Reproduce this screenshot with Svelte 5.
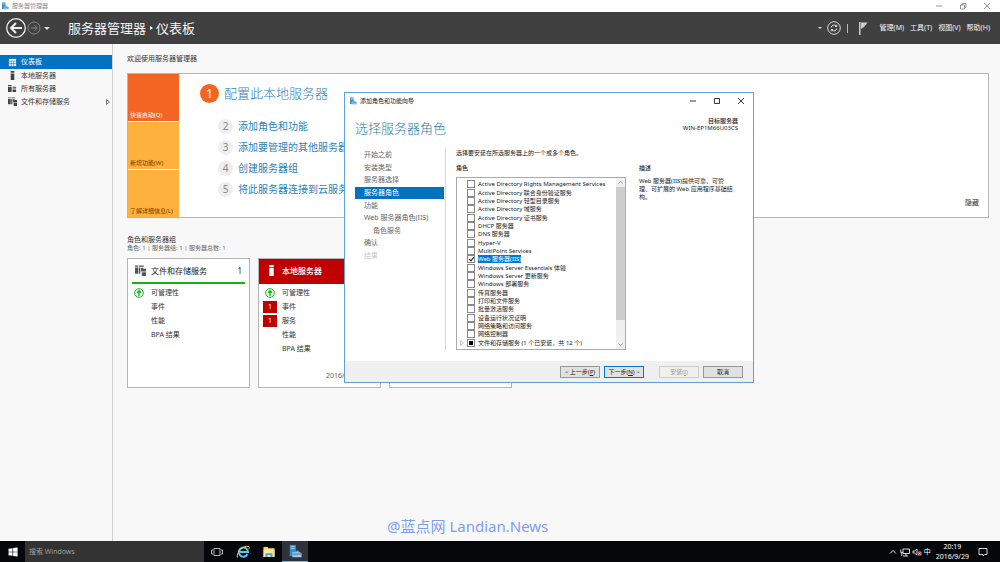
<script lang="ts">
	const navItems = [
		{ label: '仪表板', icon: 'grid', active: true },
		{ label: '本地服务器', icon: 'server' },
		{ label: '所有服务器', icon: 'servers' },
		{ label: '文件和存储服务', icon: 'storage', more: true }
	];

	const menus = ['管理(M)', '工具(T)', '视图(V)', '帮助(H)'];

	const steps = ['添加角色和功能', '添加要管理的其他服务器', '创建服务器组', '将此服务器连接到云服务'];

	const localRows = [
		{ label: '可管理性', ok: true },
		{ label: '事件', alerts: 1 },
		{ label: '服务', alerts: 1 },
		{ label: '性能' },
		{ label: 'BPA 结果' }
	];

	const storageRows = [
		{ label: '可管理性', ok: true },
		{ label: '事件' },
		{ label: '性能' },
		{ label: 'BPA 结果' }
	];

	const groups = [
		{ title: '文件和存储服务', icon: 'storage', count: 1, rows: storageRows },
		{ title: '本地服务器', icon: 'server', count: 1, critical: true, rows: localRows, updated: '2016/9/29 20:18' },
		{ title: '所有服务器', icon: 'servers', count: 1, critical: true, rows: localRows, updated: '2016/9/29 20:18' }
	];

	const wizardSteps = [
		{ label: '开始之前' },
		{ label: '安装类型' },
		{ label: '服务器选择' },
		{ label: '服务器角色', active: true },
		{ label: '功能' },
		{ label: 'Web 服务器角色(IIS)' },
		{ label: '角色服务', child: true },
		{ label: '确认' },
		{ label: '结果', disabled: true }
	];

	const roles = [
		'Active Directory Rights Management Services',
		'Active Directory 联合身份验证服务',
		'Active Directory 轻型目录服务',
		'Active Directory 域服务',
		'Active Directory 证书服务',
		'DHCP 服务器',
		'DNS 服务器',
		'Hyper-V',
		'MultiPoint Services',
		'Web 服务器(IIS)',
		'Windows Server Essentials 体验',
		'Windows Server 更新服务',
		'Windows 部署服务',
		'传真服务器',
		'打印和文件服务',
		'批量激活服务',
		'设备运行状况证明',
		'网络策略和访问服务',
		'网络控制器',
		'文件和存储服务 (1 个已安装，共 12 个)'
	];

	const selectedRole = 9;
	const partialRole = roles.length - 1;
</script>

{#snippet glyph(name)}
	<svg class="glyph" viewBox="0 0 10 10" aria-hidden="true">
		{#if name === 'grid'}
			<path d="M1 1h8v8H1z" fill="currentColor" />
			<path d="M1 3.5h8M1 6.3h8M3.6 3.5V9M6.4 3.5V9" stroke="#0072c0" stroke-width=".7" />
		{:else if name === 'server'}
			<path d="M3 0h4v2H3zM3 2.8h4V10H3z" fill="currentColor" />
		{:else if name === 'servers'}
			<path d="M0 1h4v1.5H0zM0 3.2h4V9H0zM5 3h4v1.2H5zM5 5h4v1H5zM5 6.7h4V9H5z" fill="currentColor" />
		{:else}
			<path d="M0 .5h3v1H0zM0 2.2h3V8H0zM3.6.5H8v1H3.6zM3.6 2.2h1.2V8H3.6z" fill="currentColor" />
			<path d="M5.4 2.6h1.8l.6.8H10v2.4H5.4zM6.2 6.5H10V10H6.2z" fill="currentColor" />
		{/if}
	</svg>
{/snippet}

{#snippet serverLogo()}
	<svg class="logo" viewBox="0 0 16 16" aria-hidden="true">
		<path d="M2 1h7v13H2z" fill="#2f91cf" />
		<path d="M3.2 3h4.6M3.2 5h4.6" stroke="#a8dcf8" />
		<path d="M5 9.5 11 8l4.5 2.5V15H5z" fill="#9cc6df" />
		<path d="M5 11.5h10.5" stroke="#3d7599" />
		<path d="M8 9.5V8h4v1.8" fill="none" stroke="#4e91b7" />
	</svg>
{/snippet}

{#snippet windowButtons(restore)}
	<div class="window-buttons">
		<button aria-label="最小化"><svg viewBox="0 0 8 8"><path d="M1 4h6" /></svg></button>
		<button aria-label={restore ? '还原' : '最大化'}>
			<svg viewBox="0 0 8 8">
				<path d={restore ? 'M1.5 3h4v4h-4zM3 3V1.5h4v4H5.5' : 'M1.5 1.5h5v5h-5z'} />
			</svg>
		</button>
		<button aria-label="关闭"><svg viewBox="0 0 8 8"><path d="m1 1 6 6M7 1 1 7" /></svg></button>
	</div>
{/snippet}

<div class="desktop">
	<div class="titlebar">
		{@render serverLogo()}
		<span>服务器管理器</span>
		{@render windowButtons(true)}
	</div>

	<header>
		<button class="back" aria-label="后退">
			<svg viewBox="0 0 22 22">
				<circle cx="11" cy="11" r="9.3" />
				<path d="M17 11H6M11 6l-5 5 5 5" stroke-width="2" />
			</svg>
		</button>
		<button class="forward" aria-label="前进">
			<svg viewBox="0 0 14 14">
				<circle cx="7" cy="7" r="6" />
				<path d="M3.5 7H10M7.5 4.2 10.2 7 7.5 9.8" />
			</svg>
		</button>
		<button class="caret" aria-label="历史记录"></button>
		<h1>服务器管理器<i></i>仪表板</h1>
		<div class="commands">
			<button class="caret small" aria-label="通知列表"></button>
			<button class="refresh" aria-label="刷新">
				<svg viewBox="0 0 14 14">
					<circle cx="7" cy="7" r="6.3" />
					<path d="M4.2 6.5a2.9 2.9 0 0 1 5-1.5M9.8 3.7v1.8H8M9.8 7.5a2.9 2.9 0 0 1-5 1.5M4.2 10.3V8.5H6" />
				</svg>
			</button>
			<span class="divider"></span>
			<button class="flag" aria-label="通知">
				<svg viewBox="0 0 10 13"><path d="M1 0h1.5v13H1z" /><path d="M3 .5h6.5L6 5 3 7z" /></svg>
			</button>
			<nav>
				{#each menus as menu}
					<button>{menu}</button>
				{/each}
			</nav>
		</div>
	</header>

	<div class="body">
		<aside>
			{#each navItems as item}
				<button class:active={item.active}>
					{@render glyph(item.icon)}
					<span>{item.label}</span>
					{#if item.more}
						<svg class="more" viewBox="0 0 4 6"><path d="M.5.7 3.4 3 .5 5.3z" /></svg>
					{/if}
				</button>
			{/each}
		</aside>

		<main>
			<h2>欢迎使用服务器管理器</h2>

			<section class="welcome">
				<div class="tabs">
					<button class="current">快速启动(Q)</button>
					<button>新增功能(W)</button>
					<button>了解详细信息(L)</button>
				</div>
				<div class="start">
					<a class="primary" href="#local"><b>1</b>配置此本地服务器</a>
					<ol>
						{#each steps as step, i}
							<li><a href="#step-{i + 2}"><b>{i + 2}</b>{step}</a></li>
						{/each}
					</ol>
				</div>
				<button class="hide">隐藏</button>
			</section>

			<h3>角色和服务器组</h3>
			<p class="summary">角色: 1 | 服务器组: 1 | 服务器总数: 1</p>

			<div class="groups">
				{#each groups as group}
					<article class:critical={group.critical}>
						<div class="group-head">
							{@render glyph(group.icon)}
							<span>{group.title}</span>
							<em>{group.count}</em>
						</div>
						<ul>
							{#each group.rows as row}
								<li>
									<span class="status">
										{#if row.ok}
											<svg viewBox="0 0 10 10">
												<circle cx="5" cy="5" r="4.3" />
												<path d="M5 8V3M3 4.8l2-2 2 2" stroke-width="1.4" />
											</svg>
										{:else if row.alerts}
											<b>{row.alerts}</b>
										{/if}
									</span>
									{row.label}
								</li>
							{/each}
						</ul>
						{#if group.updated}
							<time>{group.updated}</time>
						{/if}
					</article>
				{/each}
			</div>
		</main>

		<div class="watermark">@蓝点网 Landian.News</div>
	</div>

	<div class="dialog" role="dialog" aria-labelledby="wizard-title">
		<div class="dialog-title">
			{@render serverLogo()}
			<span id="wizard-title">添加角色和功能向导</span>
			{@render windowButtons(false)}
		</div>
		<div class="dialog-head">
			<h2>选择服务器角色</h2>
			<p><strong>目标服务器</strong><br />WIN-EP1M66U03CS</p>
		</div>
		<div class="dialog-body">
			<div class="wizard-nav">
				<div class="wizard-steps">
					{#each wizardSteps as step}
						<button class:active={step.active} class:child={step.child} disabled={step.disabled}>
							{step.label}
						</button>
					{/each}
				</div>
			</div>
			<div class="wizard-page">
				<p>选择要安装在所选服务器上的一个或多个角色。</p>
				<div class="columns">
					<div class="roles">
						<h4>角色</h4>
						<div class="listbox">
							<div class="role-list">
								{#each roles as role, i}
									<label class:selected={i === selectedRole}>
										<i class="expander">
											{#if i === partialRole}
												<svg viewBox="0 0 4 6"><path d="M.5.7 3.4 3 .5 5.3z" /></svg>
											{/if}
										</i>
										<input type="checkbox" checked={i === selectedRole} class:partial={i === partialRole} />
										<span>{role}</span>
									</label>
								{/each}
							</div>
							<div class="scrollbar">
								<svg viewBox="0 0 8 8"><path d="M2 5l2-2 2 2" /></svg>
								<div class="thumb"></div>
								<svg viewBox="0 0 8 8"><path d="M2 3l2 2 2-2" /></svg>
							</div>
						</div>
					</div>
					<div class="description">
						<h4>描述</h4>
						<p>Web 服务器(IIS)提供可靠、可管理、可扩展的 Web 应用程序基础结构。</p>
					</div>
				</div>
			</div>
		</div>
		<div class="dialog-actions">
			<button>&lt; 上一步(<u>P</u>)</button>
			<button class="default">下一步(<u>N</u>) &gt;</button>
			<button class="install" disabled>安装(<u>I</u>)</button>
			<button>取消</button>
		</div>
	</div>

	<footer>
		<button class="start-button" aria-label="开始">
			<svg viewBox="0 0 10 10">
				<path d="M.5 1.8 4.5 1.2v3.5h-4zM5.1 1.1 9.6.5v4.2H5.1zM.5 5.3h4v3.5l-4-.6zM5.1 5.3h4.5v4.2l-4.5-.6z" />
			</svg>
		</button>
		<input class="search" type="text" placeholder="搜索 Windows" aria-label="搜索" />
		<button class="app" aria-label="任务视图">
			<svg class="line" viewBox="0 0 12 12"><path d="M3 2.5h6v7H3zM2 4H.5v4H2M10 4h1.5v4H10" /></svg>
		</button>
		<button class="app" aria-label="Internet Explorer">
			<svg viewBox="0 0 14 14">
				<path d="M11.5 9.2A4.6 4.6 0 1 1 12 7H4" fill="none" stroke="#55c8f5" stroke-width="2" />
				<path d="M1.5 12.5C-.5 9 7-.5 12.8 1.6c.8.5.5 1.6 0 2.5" fill="none" stroke="#f5cf3c" />
			</svg>
		</button>
		<button class="app" aria-label="文件资源管理器">
			<svg viewBox="0 0 14 14">
				<path d="M1.5 2h4l1 1.2h6V12h-11z" fill="#f6d873" />
				<path d="M1.5 4.5h11V12h-11z" fill="#fce99a" />
				<path d="M3.5 12V8.2h7V12h-2v-2h-3v2z" fill="#42a7de" />
			</svg>
		</button>
		<button class="app running" aria-label="服务器管理器">{@render serverLogo()}</button>

		<div class="tray">
			<svg viewBox="0 0 10 10"><path d="m2 6.5 3-3 3 3" /></svg>
			<svg viewBox="0 0 10 10"><path d="M3 2h6.5v4.5H3zM6 6.5V9M3 9h5M.8 2.5v3h2M1.8 5.5V9" /></svg>
			<svg viewBox="0 0 10 10">
				<path d="M1 4h1.5L5 2v6L2.5 6H1z" />
				<circle cx="7.5" cy="6.5" r="2.5" class="mute" />
				<path d="m6.5 5.5 2 2m0-2-2 2" />
			</svg>
			<span>中</span>
			<time>20:19<br />2016/9/29</time>
			<svg class="notice" viewBox="0 0 10 10"><path d="M1 1.5h8v6H6.5L5 9V7.5H1z" /></svg>
		</div>
	</footer>
</div>

<style>
	:global(body) {
		margin: 0;
	}

	.desktop {
		position: relative;
		display: flex;
		flex-direction: column;
		min-height: 100vh;
		background: #f8f8f8;
		color: #333;
		font: 7px/10px 'Noto Sans', 'Noto Sans CJK SC', sans-serif;
	}

	.desktop * {
		box-sizing: border-box;
	}

	h1,
	h2,
	h3,
	h4,
	p,
	ol,
	ul {
		margin: 0;
		padding: 0;
		font-size: inherit;
		font-weight: 400;
		list-style: none;
	}

	button {
		padding: 0;
		border: 0;
		background: none;
		color: inherit;
		font: inherit;
		white-space: nowrap;
	}

	a {
		color: #2e7fb9;
		text-decoration: none;
	}

	svg {
		display: block;
		flex: none;
	}

	.glyph {
		width: 9px;
		height: 9px;
	}

	.logo {
		width: 8px;
		height: 8px;
	}

	.titlebar {
		display: flex;
		align-items: center;
		gap: 3px;
		height: 12px;
		padding: 0 9px 0 1px;
		background: #fff;
		color: #8a8a8a;
		font-size: 6px;
	}

	.window-buttons {
		display: flex;
		gap: 16px;
		margin-left: auto;
	}

	.window-buttons svg {
		width: 8px;
		height: 8px;
		fill: none;
		stroke: currentColor;
		stroke-width: 0.9;
	}

	header {
		display: flex;
		align-items: center;
		height: 32px;
		padding: 0 10px 0 5px;
		background: #404040;
		color: #f5f5f5;
	}

	.back svg {
		width: 22px;
		height: 22px;
		fill: none;
		stroke: #eee;
		stroke-width: 1.3;
	}

	.forward svg {
		width: 14px;
		height: 14px;
		fill: none;
		stroke: #888;
	}

	.caret {
		margin-left: 3px;
		border: 3px solid transparent;
		border-top-color: #ddd;
		border-bottom: 0;
	}

	.caret.small {
		border-width: 2px 2px 0;
	}

	h1 {
		display: flex;
		align-items: center;
		margin-left: 18px;
		font-size: 13px;
		line-height: 20px;
	}

	h1 i {
		margin: 0 3px 0 4px;
		border: 2px solid transparent;
		border-left: 3px solid #fff;
		border-right: 0;
	}

	.commands {
		display: flex;
		align-items: center;
		margin-left: auto;
	}

	.refresh {
		margin: 0 6px 0 5px;
	}

	.refresh svg {
		width: 14px;
		height: 14px;
		fill: none;
		stroke: #ddd;
	}

	.divider {
		width: 1px;
		height: 9px;
		background: #bbb;
	}

	.flag {
		margin: 0 12px 0 10px;
	}

	.flag svg {
		width: 10px;
		height: 13px;
		fill: #ccc;
	}

	.commands nav {
		display: flex;
		gap: 6px;
	}

	.body {
		position: relative;
		display: flex;
		flex: 1;
	}

	aside {
		display: flex;
		flex-direction: column;
		flex: none;
		width: 113px;
		padding-top: 11px;
		border-right: 1px solid #d0d0d0;
	}

	aside button {
		display: flex;
		align-items: center;
		gap: 4px;
		height: 13px;
		padding: 0 2px 0 8px;
	}

	aside .glyph {
		color: #444;
	}

	aside .active {
		height: 14px;
		background: #0072c0;
		color: #fff;
	}

	aside .active .glyph {
		color: #fff;
	}

	.more {
		width: 4px;
		height: 6px;
		margin-left: auto;
		fill: none;
		stroke: #555;
		stroke-width: 0.8;
	}

	main {
		flex: 1;
		padding: 10px 11px 0 14px;
	}

	.welcome {
		display: flex;
		height: 145px;
		margin-top: 9px;
		border: 1px solid #b5b5b5;
		background: #fff;
	}

	.tabs {
		display: flex;
		flex-direction: column;
		gap: 1px;
		width: 51px;
	}

	.tabs button {
		display: flex;
		flex: 1;
		align-items: flex-end;
		padding: 0 2px 1px;
		background: #ffb13d;
		color: #6b3c05;
		font-size: 6px;
	}

	.tabs .current {
		background: #f26522;
		color: #fff;
	}

	.start {
		padding: 10px 0 0 21px;
	}

	.start a {
		display: flex;
		align-items: center;
		gap: 5px;
		font-size: 10px;
		line-height: 15px;
	}

	.start b {
		width: 15px;
		height: 15px;
		border-radius: 50%;
		background: #eee;
		color: #888;
		font-weight: 400;
		text-align: center;
	}

	.start .primary {
		font-size: 13px;
		line-height: 19px;
		font-weight: 300;
	}

	.start .primary b {
		width: 19px;
		height: 19px;
		background: #f26522;
		color: #fff;
	}

	ol {
		display: flex;
		flex-direction: column;
		gap: 6px;
		margin: 16px 0 0 18px;
	}

	.hide {
		align-self: flex-end;
		margin: 0 9px 9px auto;
	}

	h3 {
		margin-top: 17px;
		line-height: 9px;
	}

	.summary {
		color: #666;
		font-size: 6px;
		line-height: 9px;
	}

	.groups {
		display: flex;
		gap: 8px;
		margin-top: 5px;
	}

	article {
		display: flex;
		flex-direction: column;
		width: 123px;
		height: 130px;
		border: 1px solid #b5b5b5;
		background: #fff;
	}

	.group-head {
		display: flex;
		align-items: center;
		gap: 5px;
		height: 25px;
		margin: 0 4px;
		padding: 0 3px;
		border-bottom: 2px solid #12b412;
		color: #222;
		font-size: 8px;
	}

	.group-head .glyph {
		width: 11px;
		height: 11px;
		color: #555;
	}

	.group-head em {
		margin-left: auto;
		font-style: normal;
	}

	.critical .group-head {
		margin: 0;
		padding: 0 7px;
		border-color: #c00000;
		background: #c00000;
		color: #fff;
		font-weight: 500;
	}

	.critical .group-head .glyph {
		color: #fff;
	}

	ul {
		padding: 2px 0 0 4px;
	}

	ul li {
		display: flex;
		align-items: center;
		gap: 5px;
		height: 14px;
	}

	.status {
		display: flex;
		justify-content: center;
		width: 14px;
	}

	.status svg {
		width: 10px;
		height: 10px;
		fill: none;
		stroke: #12b412;
	}

	.status b {
		width: 14px;
		background: #c00000;
		color: #fff;
		font-weight: 400;
		line-height: 12px;
		text-align: center;
	}

	article time {
		margin: auto 1px 6px auto;
		color: #666;
	}

	.watermark {
		position: absolute;
		left: 387px;
		bottom: 5px;
		color: #7b9ff2;
		font-size: 15px;
		line-height: 20px;
	}

	.dialog {
		position: absolute;
		top: 92px;
		left: 344px;
		display: flex;
		flex-direction: column;
		width: 410px;
		border: 1px solid #5ba3dc;
		background: #fff;
		color: #222;
	}

	.dialog-title {
		display: flex;
		align-items: center;
		gap: 3px;
		height: 15px;
		padding: 0 8px 0 4px;
		font-size: 6px;
	}

	.dialog-head {
		display: flex;
		justify-content: space-between;
		padding: 10px 15px 0 10px;
	}

	.dialog-head h2 {
		color: #2681a5;
		font-size: 13px;
		line-height: 20px;
		font-weight: 300;
	}

	.dialog-head p {
		font-size: 6px;
		line-height: 7px;
		text-align: right;
	}

	strong {
		font-weight: 500;
	}

	.dialog-body {
		display: flex;
		gap: 10px;
		padding: 10px 15px 11px 10px;
	}

	.wizard-nav {
		width: 91px;
		padding-top: 1px;
		border-right: 1px solid #d5d5d5;
	}

	.wizard-steps {
		display: flex;
		flex-direction: column;
		height: 113px;
	}

	.wizard-nav button {
		flex: 1;
		margin-right: 1px;
		padding-left: 9px;
		color: #666;
		line-height: 12px;
		text-align: left;
	}

	.wizard-nav .active {
		background: #0072c0;
		color: #fff;
	}

	.wizard-nav .child {
		padding-left: 18px;
	}

	.wizard-nav button:disabled {
		color: #c8c8c8;
	}

	.wizard-page {
		flex: 1;
		font-size: 6px;
	}

	.columns {
		display: flex;
		gap: 13px;
		margin-top: 5px;
	}

	.roles {
		width: 170px;
	}

	h4 {
		font-weight: 500;
	}

	.listbox {
		display: flex;
		height: 173px;
		margin-top: 4px;
		border: 1px solid #aaa;
	}

	.role-list {
		display: flex;
		flex: 1;
		flex-direction: column;
		padding: 2px 0 2px 3px;
	}

	label {
		display: flex;
		flex: 1;
		align-items: center;
		line-height: 8px;
		white-space: nowrap;
	}

	.expander {
		width: 7px;
	}

	.expander svg {
		width: 4px;
		height: 6px;
		fill: none;
		stroke: #999;
		stroke-width: 0.6;
	}

	input[type='checkbox'] {
		display: grid;
		flex: none;
		place-items: center;
		width: 8px;
		height: 8px;
		margin: 0 3px 0 0;
		border: 1px solid #888;
		appearance: none;
		background: #fff;
	}

	input:checked::before {
		width: 2px;
		height: 4px;
		margin-bottom: 2px;
		border: solid #111;
		border-width: 0 1px 1px 0;
		content: '';
		transform: rotate(40deg);
	}

	.partial::before {
		width: 4px;
		height: 4px;
		background: #000;
		content: '';
	}

	.selected span {
		background: #0078d7;
		color: #fff;
	}

	.scrollbar {
		display: flex;
		flex-direction: column;
		width: 9px;
		background: #f0f0f0;
	}

	.scrollbar svg {
		width: 9px;
		height: 9px;
		fill: none;
		stroke: #888;
		stroke-width: 0.7;
	}

	.thumb {
		flex: 1;
		margin-bottom: 20px;
		background: #cdcdcd;
	}

	.description {
		flex: 1;
	}

	.description p {
		max-width: 94px;
		margin-top: 4px;
		line-height: 8px;
	}

	.dialog-actions {
		display: flex;
		justify-content: flex-end;
		gap: 4px;
		padding: 5px 10px 4px;
		background: #f0f0f0;
	}

	.dialog-actions button {
		width: 40px;
		height: 12px;
		border: 1px solid #999;
		background: #e1e1e1;
		font-size: 6px;
		line-height: 10px;
	}

	.dialog-actions .default {
		border-color: #0078d7;
	}

	.dialog-actions .install {
		margin-left: 11px;
		border-color: #ccc;
		background: #f0f0f0;
		color: #999;
	}

	footer {
		display: flex;
		height: 21px;
		background: #05070b;
		color: #fff;
	}

	.start-button {
		width: 25px;
	}

	.start-button svg {
		width: 10px;
		height: 10px;
		margin: auto;
		fill: #fff;
	}

	.search {
		width: 179px;
		padding: 0 4px;
		border: 0;
		border-radius: 0;
		background: #333;
		color: #fff;
		font: inherit;
	}

	.search::placeholder {
		color: #a0a0a0;
	}

	.app {
		width: 26px;
	}

	.app svg {
		width: 14px;
		height: 14px;
		margin: auto;
	}

	.app .line {
		width: 12px;
		height: 12px;
		fill: none;
		stroke: #ccc;
		stroke-width: 0.9;
	}

	.running {
		border-bottom: 1px solid #76b9ed;
		background: #2f3338;
	}

	.tray {
		display: flex;
		align-items: center;
		gap: 2px;
		margin-left: auto;
		padding-right: 12px;
	}

	.tray svg {
		width: 10px;
		height: 10px;
		fill: none;
		stroke: #eee;
		stroke-width: 0.9;
	}

	.tray .mute {
		fill: #d32f3b;
		stroke: none;
	}

	.tray time {
		margin: 0 7px 0 3px;
		text-align: center;
	}
</style>
